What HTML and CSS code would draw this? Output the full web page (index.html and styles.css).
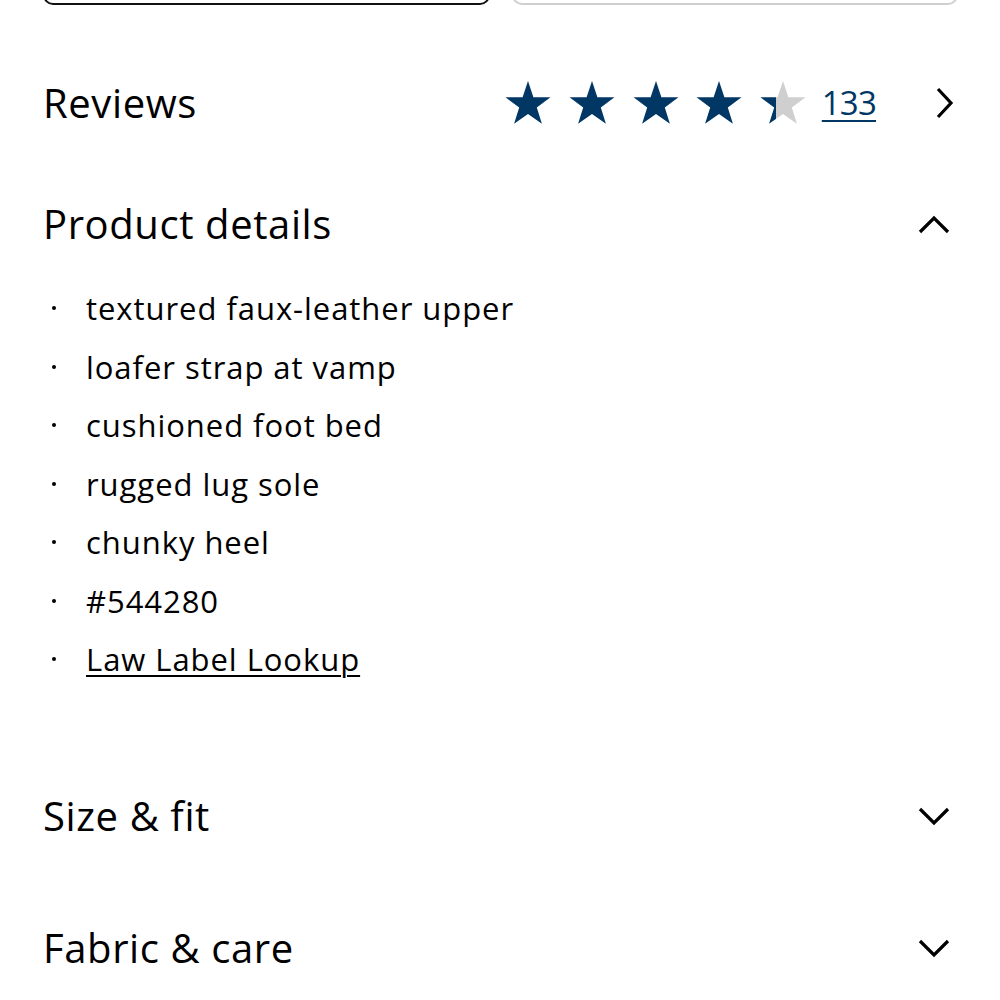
FILE: index.html
```html
<!DOCTYPE html>
<html lang="en">
<head>
<meta charset="utf-8">
<link rel="stylesheet" href="styles.css">
</head>
<body>
<div class="page">
  <div class="buttons">
    <div class="btn btn-dark"></div>
    <div class="btn btn-light"></div>
  </div>

  <div class="row reviews">
    <h2 class="title">Reviews</h2>
    <div class="rating">
      <svg class="stars" width="300" height="46" viewBox="0 0 300 46">
        <defs>
          <path id="st" d="M23 1 L28.4 17.2 L45.5 17.3 L31.8 27.5 L36.9 43.8 L23 33.9 L9.1 43.8 L14.2 27.5 L0.5 17.3 L17.6 17.2 Z"/>
          <linearGradient id="half" x1="0" x2="1" y1="0" y2="0">
            <stop offset="0.35" stop-color="#003764"/>
            <stop offset="0.35" stop-color="#cfcfcf"/>
          </linearGradient>
        </defs>
        <use href="#st" x="0" fill="#003764"/>
        <use href="#st" x="64" fill="#003764"/>
        <use href="#st" x="128" fill="#003764"/>
        <use href="#st" x="191" fill="#003764"/>
        <use href="#st" x="255" fill="url(#half)"/>
      </svg>
      <a class="count">133</a>
      <svg class="chev-right" width="22" height="34" viewBox="0 0 22 34"><path d="M4 3 L17 17 L4 31" fill="none" stroke="#000" stroke-width="3.2"/></svg>
    </div>
  </div>

  <div class="row details-head">
    <h2 class="title">Product details</h2>
    <svg class="chev" width="34" height="22" viewBox="0 0 34 22"><path d="M3 19 L17 5 L31 19" fill="none" stroke="#000" stroke-width="3.2"/></svg>
  </div>

  <ul class="details">
    <li>textured faux-leather upper</li>
    <li>loafer strap at vamp</li>
    <li>cushioned foot bed</li>
    <li>rugged lug sole</li>
    <li>chunky heel</li>
    <li>#544280</li>
    <li><a class="law">Law Label Lookup</a></li>
  </ul>

  <div class="row section size">
    <h2 class="title">Size &amp; fit</h2>
    <svg class="chev" width="34" height="22" viewBox="0 0 34 22"><path d="M3 4 L17 18 L31 4" fill="none" stroke="#000" stroke-width="3.2"/></svg>
  </div>

  <div class="row section fabric">
    <h2 class="title">Fabric &amp; care</h2>
    <svg class="chev" width="34" height="22" viewBox="0 0 34 22"><path d="M3 4 L17 18 L31 4" fill="none" stroke="#000" stroke-width="3.2"/></svg>
  </div>
</div>
</body>
</html>
```

FILE: styles.css
```css
html, body {
  margin: 0;
  padding: 0;
  background: #fff;
}
body {
  font-family: "Open Sans", "Noto Sans", sans-serif;
  color: #000;
}
.page {
  padding: 0 42px 0 43px;
}
.buttons {
  display: flex;
  gap: 22px;
  margin-top: -43px;
}
.btn {
  flex: 1;
  height: 48px;
  border-radius: 10px;
  box-sizing: border-box;
}
.btn-dark {
  border: 2.5px solid #111;
}
.btn-light {
  border: 2.5px solid #cfcfcf;
}
.row {
  display: flex;
  align-items: center;
  justify-content: space-between;
}
.title {
  margin: 0;
  font-weight: 400;
  font-size: 40px;
  line-height: 50px;
  letter-spacing: 0.6px;
}
.reviews {
  margin-top: 73px;
}
.rating {
  display: flex;
  align-items: center;
}
.stars {
  display: block;
  margin-right: 17px;
}
.count {
  font-size: 33px;
  color: #003764;
  text-decoration: underline;
  text-decoration-thickness: 2px;
  text-underline-offset: 5px;
  letter-spacing: -0.8px;
  line-height: 44px;
}
.chev-right {
  display: block;
  margin-left: 58px;
  margin-right: 2px;
}
.details-head {
  margin-top: 71px;
  padding-right: 7px;
}
.chev {
  display: block;
}
.details {
  list-style: none;
  margin: 30px 0 0 0;
  padding: 0;
}
.details li {
  display: flex;
  align-items: center;
  font-size: 31px;
  line-height: 40px;
  height: 58.5px;
  letter-spacing: 0.95px;
}
.details li::before {
  content: "";
  width: 4px;
  height: 4px;
  border-radius: 50%;
  background: #000;
  margin: 0 30px 0 9px;
  flex: none;
}
.law {
  text-decoration: underline;
  text-decoration-thickness: 2px;
  text-underline-offset: 4px;
}
.size {
  margin-top: 102px;
  padding-right: 7px;
}
.fabric {
  margin-top: 82px;
  padding-right: 7px;
}
```
